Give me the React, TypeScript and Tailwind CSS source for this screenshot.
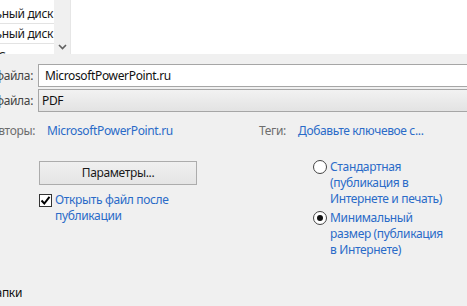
const FONT = "font-['Segoe_UI','Noto_Sans','Open_Sans',sans-serif] tracking-[-0.35px]";

function ListRow({ label }: { label: string }) {
  return (
    <div className="h-[20px] shrink-0 flex items-center overflow-hidden whitespace-nowrap border-b border-[#e3e3e3]">
      <span className="ml-[-38px] text-[12px] text-[#1a1a1a]">{label}</span>
    </div>
  );
}

function Check() {
  return (
    <span className="w-[13px] h-[13px] border border-[#333] bg-white flex items-center justify-center shrink-0">
      <svg width="11" height="11" viewBox="0 0 11 11">
        <path d="M1.5 5.5 L4.3 8.5 L9.5 1.8" stroke="#000" strokeWidth="2" fill="none" />
      </svg>
    </span>
  );
}

function Radio({ on = false }: { on?: boolean }) {
  return (
    <span className="w-[14px] h-[14px] rounded-full border border-[#444] bg-white flex items-center justify-center shrink-0">
      {on && <span className="w-[6px] h-[6px] rounded-full bg-[#111]" />}
    </span>
  );
}

export default function App() {
  return (
    <div className={`w-[467px] h-[306px] overflow-hidden bg-[#f0f0f0] ${FONT}`}>
      {/* folder list */}
      <div className="h-[54px] flex bg-white">
        <div className="w-[54px] pt-[4px] flex flex-col overflow-hidden">
          <ListRow label="Локальный диск (C:)" />
          <ListRow label="Локальный диск (D:)" />
          <div className="h-[20px] shrink-0 overflow-hidden whitespace-nowrap">
            <span className="block ml-[-2px] mt-[4px] text-[12px] text-[#1a1a1a]">Сеть</span>
          </div>
        </div>
        <div className="w-[17px] bg-[#f0f0f0] flex flex-col justify-end items-center pb-[4px] border-r border-[#e6e6e6]">
          <svg width="9" height="6" viewBox="0 0 9 6">
            <path d="M1 1 L4.5 4.5 L8 1" stroke="#606060" strokeWidth="1.6" fill="none" />
          </svg>
        </div>
        <div className="flex-1 bg-white" />
      </div>

      {/* form fields */}
      <div className="pt-[10px] flex flex-col gap-[2px] text-[12px] overflow-hidden">
        <div className="flex items-center">
          <div className="w-[33px] shrink-0 flex justify-end overflow-hidden whitespace-nowrap text-[#444]">Имя файла:</div>
          <div className="ml-[5px] w-[470px] shrink-0 h-[23px] border border-[#a6a6a6] bg-white flex items-center pl-[6px] text-[#111]">
            MicrosoftPowerPoint.ru
          </div>
        </div>
        <div className="flex items-center">
          <div className="w-[33px] shrink-0 flex justify-end overflow-hidden whitespace-nowrap text-[#444]">Тип файла:</div>
          <div className="ml-[5px] w-[470px] shrink-0 h-[23px] border border-[#a6a6a6] bg-gradient-to-b from-[#f2f2f2] to-[#e3e3e3] flex items-center pl-[3px] text-[#111]">
            PDF
          </div>
        </div>
        <div className="mt-[9px] h-[16px] flex items-center whitespace-nowrap">
          <div className="w-[35px] shrink-0 flex justify-end overflow-hidden text-[#6d6d6d]">Авторы:</div>
          <div className="ml-[12px] w-[212px] shrink-0 text-[#2a6bc8]">MicrosoftPowerPoint.ru</div>
          <div className="shrink-0 text-[#6d6d6d]">Теги:</div>
          <div className="ml-[12px] shrink-0 text-[#2a6bc8]">Добавьте ключевое с...</div>
        </div>
      </div>

      {/* options */}
      <div className="mt-[22px] flex text-[12px] leading-[16px]">
        <div className="pl-[39px] w-[313px] shrink-0 flex flex-col">
          <button className="w-[158px] h-[24px] border border-[#acacac] bg-gradient-to-b from-[#f0f0f0] to-[#e5e5e5] text-[#1a1a1a] flex items-center justify-center">
            Параметры...
          </button>
          <div className="mt-[9px] flex items-start gap-[3px]">
            <Check />
            <div className="mt-[-2px] text-[#2a6bc8]">
              Открыть файл после
              <br />
              публикации
            </div>
          </div>
        </div>
        <div className="mt-[-1px] flex flex-col gap-[4px] text-[#2a6bc8]">
          <div className="flex items-start gap-[3px]">
            <Radio />
            <div className="mt-[-1px]">
              Стандартная
              <br />
              (публикация в
              <br />
              Интернете и печать)
            </div>
          </div>
          <div className="flex items-start gap-[3px]">
            <Radio on />
            <div className="mt-[-1px]">
              Минимальный
              <br />
              размер (публикация
              <br />
              в Интернете)
            </div>
          </div>
        </div>
      </div>

      {/* section */}
      <div className="mt-[26px] w-[22px] flex justify-end overflow-hidden whitespace-nowrap text-[12px] text-[#111]">
        Папки
      </div>
    </div>
  );
}
